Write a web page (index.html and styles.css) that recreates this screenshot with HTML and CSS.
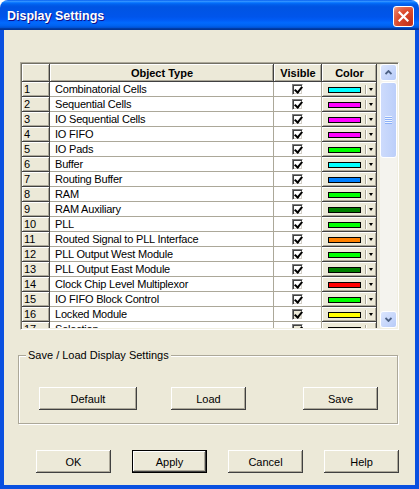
FILE: index.html
```html
<!DOCTYPE html>
<html>
<head>
  <title>Display Settings</title>
  <meta charset="UTF-8">
  <link rel="stylesheet" href="styles.css">
</head>
<body>
  <div class="window">
    <div class="titlebar">
      <span class="title">Display Settings</span>
      <span class="close">
        <svg width="11" height="11" viewBox="0 0 11 11"><path d="M1.5 1.5 L9.5 9.5 M9.5 1.5 L1.5 9.5" stroke="#fff" stroke-width="2.2" stroke-linecap="square" fill="none"/></svg>
      </span>
    </div>

    <div class="client">
      <div class="list">
        <div class="grid">
          <div class="row head">
            <div class="hcell"></div>
            <div class="hcell">Object Type</div>
            <div class="hcell">Visible</div>
            <div class="hcell">Color</div>
          </div>
          <div class="row"><div class="num">1</div><div class="name">Combinatorial Cells</div><div class="vis"><span class="check"></span></div><div class="color"><span class="swatch cyan"></span><span class="sep"></span><span class="arrow"></span></div></div>
          <div class="row"><div class="num">2</div><div class="name">Sequential Cells</div><div class="vis"><span class="check"></span></div><div class="color"><span class="swatch magenta"></span><span class="sep"></span><span class="arrow"></span></div></div>
          <div class="row"><div class="num">3</div><div class="name">IO Sequential Cells</div><div class="vis"><span class="check"></span></div><div class="color"><span class="swatch magenta"></span><span class="sep"></span><span class="arrow"></span></div></div>
          <div class="row"><div class="num">4</div><div class="name">IO FIFO</div><div class="vis"><span class="check"></span></div><div class="color"><span class="swatch magenta"></span><span class="sep"></span><span class="arrow"></span></div></div>
          <div class="row"><div class="num">5</div><div class="name">IO Pads</div><div class="vis"><span class="check"></span></div><div class="color"><span class="swatch lime"></span><span class="sep"></span><span class="arrow"></span></div></div>
          <div class="row"><div class="num">6</div><div class="name">Buffer</div><div class="vis"><span class="check"></span></div><div class="color"><span class="swatch cyan"></span><span class="sep"></span><span class="arrow"></span></div></div>
          <div class="row"><div class="num">7</div><div class="name">Routing Buffer</div><div class="vis"><span class="check"></span></div><div class="color"><span class="swatch blue"></span><span class="sep"></span><span class="arrow"></span></div></div>
          <div class="row"><div class="num">8</div><div class="name">RAM</div><div class="vis"><span class="check"></span></div><div class="color"><span class="swatch lime"></span><span class="sep"></span><span class="arrow"></span></div></div>
          <div class="row"><div class="num">9</div><div class="name">RAM Auxiliary</div><div class="vis"><span class="check"></span></div><div class="color"><span class="swatch green"></span><span class="sep"></span><span class="arrow"></span></div></div>
          <div class="row"><div class="num">10</div><div class="name">PLL</div><div class="vis"><span class="check"></span></div><div class="color"><span class="swatch lime"></span><span class="sep"></span><span class="arrow"></span></div></div>
          <div class="row"><div class="num">11</div><div class="name">Routed Signal to PLL Interface</div><div class="vis"><span class="check"></span></div><div class="color"><span class="swatch orange"></span><span class="sep"></span><span class="arrow"></span></div></div>
          <div class="row"><div class="num">12</div><div class="name">PLL Output West Module</div><div class="vis"><span class="check"></span></div><div class="color"><span class="swatch lime"></span><span class="sep"></span><span class="arrow"></span></div></div>
          <div class="row"><div class="num">13</div><div class="name">PLL Output East Module</div><div class="vis"><span class="check"></span></div><div class="color"><span class="swatch green"></span><span class="sep"></span><span class="arrow"></span></div></div>
          <div class="row"><div class="num">14</div><div class="name">Clock Chip Level Multiplexor</div><div class="vis"><span class="check"></span></div><div class="color"><span class="swatch red"></span><span class="sep"></span><span class="arrow"></span></div></div>
          <div class="row"><div class="num">15</div><div class="name">IO FIFO Block Control</div><div class="vis"><span class="check"></span></div><div class="color"><span class="swatch lime"></span><span class="sep"></span><span class="arrow"></span></div></div>
          <div class="row"><div class="num">16</div><div class="name">Locked Module</div><div class="vis"><span class="check dim"></span></div><div class="color"><span class="swatch yellow"></span><span class="sep"></span><span class="arrow"></span></div></div>
          <div class="row"><div class="num">17</div><div class="name">Selection</div><div class="vis"><span class="check dim"></span></div><div class="color"><span class="swatch gray"></span><span class="sep"></span><span class="arrow"></span></div></div>
        </div>

        <div class="vscroll">
          <div class="sb-btn">
            <svg width="7" height="5" viewBox="0 0 7 5"><path d="M0.5 4 L3.5 1 L6.5 4" stroke="#4d6185" stroke-width="1.8" fill="none"/></svg>
          </div>
          <div class="sb-track">
            <div class="sb-thumb"><span class="grip"></span></div>
          </div>
          <div class="sb-btn">
            <svg width="7" height="5" viewBox="0 0 7 5"><path d="M0.5 1 L3.5 4 L6.5 1" stroke="#4d6185" stroke-width="1.8" fill="none"/></svg>
          </div>
        </div>
      </div>

      <fieldset class="group">
        <legend>Save / Load Display Settings</legend>
        <div class="group-buttons">
          <button class="btn wide">Default</button>
          <button class="btn load">Load</button>
          <button class="btn save">Save</button>
        </div>
      </fieldset>

      <div class="dialog-buttons">
        <button class="btn">OK</button>
        <button class="btn default">Apply</button>
        <button class="btn">Cancel</button>
        <button class="btn">Help</button>
      </div>
    </div>
  </div>
</body>
</html>
```

FILE: styles.css
```css
* {
  box-sizing: border-box;
}
body {
  margin: 0;
  background: #fff;
  font-family: "Liberation Sans", Arial, sans-serif;
  font-size: 11px;
  color: #000;
}
.window {
  width: 419px;
  height: 489px;
  display: flex;
  flex-direction: column;
}

/* title bar */
.titlebar {
  height: 30px;
  flex: none;
  display: flex;
  align-items: center;
  justify-content: space-between;
  padding: 2px 5px 0 7px;
  border-radius: 8px 8px 0 0;
  background: linear-gradient(to bottom, #0058ee 0%, #3593ff 4%, #288eff 6%, #127dff 8%, #036ffc 10%, #0262ee 14%, #0057e5 20%, #0054e3 24%, #0055eb 56%, #005bf5 66%, #026afe 76%, #0062ef 86%, #0052d6 92%, #0040ab 94%, #003092 100%);
}
.title {
  color: #fff;
  font-weight: bold;
  font-size: 12.5px;
  text-shadow: 1px 1px #0f1089;
}
.close {
  width: 21px;
  height: 21px;
  border: 1px solid #fff;
  border-radius: 3px;
  display: flex;
  align-items: center;
  justify-content: center;
  background: radial-gradient(circle at 85% 85%, #c4311b 0, #dc4a2c 55%, #e8785e 85%, #f5b5a3 100%);
}

/* client area */
.client {
  flex: 1;
  background: #ece9d8;
  border: 4px solid #0a50e0;
  border-top: 0;
  padding-top: 32px;
}

.list {
  margin-left: 16px;
  width: 379px;
  height: 268px;
  border: 1px solid;
  border-color: #aca899 #fff #fff #aca899;
  padding: 1px;
  box-shadow: inset 1px 1px #716f64, inset -1px -1px #f1efe2;
  display: flex;
  gap: 3px;
}
.grid {
  width: 355px;
  height: 264px;
  overflow: hidden;
}
.row {
  display: grid;
  grid-template-columns: 28px 224px 48px 55px;
  height: 15px;
}
.row.head {
  height: 18px;
}
.hcell, .num, .color {
  background: #ece9d8;
  box-shadow: inset -1px -1px #404040, inset 1px 1px #fff, inset -2px -2px #aca899;
}
.hcell {
  font-weight: bold;
  text-align: center;
  line-height: 18px;
}
.num {
  padding-left: 2px;
  line-height: 15px;
}
.name, .vis {
  background: #fff;
  border-right: 1px solid #aca899;
  border-bottom: 1px solid #aca899;
}
.name {
  padding-left: 5px;
  line-height: 14px;
  letter-spacing: -0.2px;
  white-space: nowrap;
  overflow: hidden;
}
.vis {
  display: flex;
  align-items: center;
  justify-content: center;
}
.check {
  position: relative;
  width: 11px;
  height: 11px;
  background: #fff;
  border: 1px solid;
  border-color: #808080 #fff #fff #808080;
  box-shadow: inset 1px 1px #404040, inset -1px -1px #d4d0c8;
}
.check::after {
  content: "";
  position: absolute;
  left: 3px;
  top: 0;
  width: 3px;
  height: 6px;
  border-right: 2px solid #000;
  border-bottom: 2px solid #000;
  transform: rotate(40deg);
}
.check.dim {
  background: #ece9d8;
}
.color {
  display: flex;
  align-items: center;
  padding-left: 6px;
}
.swatch {
  width: 33px;
  height: 6px;
  border: 1px solid #000;
}
.sep {
  width: 2px;
  height: 9px;
  margin-left: 4px;
  border-left: 1px solid #aca899;
  border-right: 1px solid #fff;
}
.arrow {
  width: 1px;
  margin-left: 2px;
  border-top: 3px solid #000;
  border-left: 2px solid transparent;
  border-right: 2px solid transparent;
}
.cyan { background: #00ffff; }
.magenta { background: #ff00ff; }
.lime { background: #00ff00; }
.blue { background: #0080ff; }
.green { background: #008000; }
.orange { background: #ff8000; }
.red { background: #ff0000; }
.yellow { background: #ffff00; }
.gray { background: #404040; }

/* scrollbar */
.vscroll {
  width: 17px;
  display: flex;
  flex-direction: column;
  background: #f4f3ee;
}
.sb-btn {
  height: 17px;
  flex: none;
  border: 1px solid #fff;
  border-radius: 3px;
  background: linear-gradient(135deg, #dce6fe, #b7cbf8);
  display: flex;
  align-items: center;
  justify-content: center;
}
.sb-track {
  flex: 1;
  padding-top: 1px;
}
.sb-thumb {
  height: 76px;
  border: 1px solid #fff;
  border-radius: 3px;
  background: linear-gradient(to right, #cddbfc, #bccffa);
  display: flex;
  align-items: center;
  justify-content: center;
}
.grip {
  width: 7px;
  height: 8px;
  background: repeating-linear-gradient(to bottom, #eef4fe 0 1px, #8cb0f8 1px 2px);
}

/* group box */
.group {
  margin: 19px 0 0 14px;
  width: 380px;
  min-width: 0;
  padding: 25px 0 13px 7px;
  border: 1px solid #aca899;
  box-shadow: inset 1px 1px #fff, 1px 1px #fff;
}
.group legend {
  padding: 0 2px;
  line-height: 13px;
  background: #ece9d8;
}
.group-buttons {
  display: flex;
  margin-left: 13px;
}

/* buttons */
.btn {
  width: 75px;
  height: 23px;
  padding: 0;
  border: none;
  background: #ece9d8;
  font-family: inherit;
  font-size: 11px;
  color: #000;
  box-shadow: inset -1px -1px #404040, inset 1px 1px #fff, inset -2px -2px #aca899;
}
.btn.wide {
  width: 98px;
}
.btn.load {
  margin-left: 34px;
}
.btn.save {
  margin-left: 57px;
}
.btn.default {
  box-shadow: inset 0 0 0 1px #000, inset -2px -2px #404040, inset 2px 2px #fff, inset -3px -3px #aca899;
}
.dialog-buttons {
  display: flex;
  gap: 21px;
  margin: 26px 0 0 32px;
}
```
